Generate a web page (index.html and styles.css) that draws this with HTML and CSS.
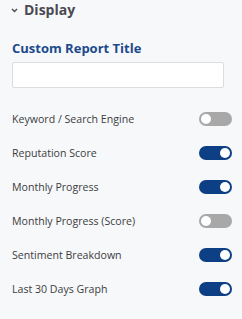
FILE: index.html
```html
<!DOCTYPE html>
<html lang="en">
<head>
  <meta charset="UTF-8">
  <meta name="viewport" content="width=device-width, initial-scale=1.0">
  <title>Display Settings</title>
  <link rel="stylesheet" href="styles.css">
</head>
<body>

  <div class="panel">
    <!-- Section header -->
    <div class="section-head">
      <svg class="chevron" width="7" height="5" viewBox="0 0 7 5">
        <path d="M1 1 L3.5 3.5 L6 1" fill="none" stroke="#4a4a52" stroke-width="1.4"/>
      </svg>
      <span>Display</span>
    </div>

    <div class="field-label">Custom Report Title</div>
    <input class="title-input" type="text">

    <div class="options">
      <div class="option">
        <span>Keyword / Search Engine</span>
        <span class="toggle"></span>
      </div>
      <div class="option">
        <span>Reputation Score</span>
        <span class="toggle on"></span>
      </div>
      <div class="option">
        <span>Monthly Progress</span>
        <span class="toggle on"></span>
      </div>
      <div class="option">
        <span>Monthly Progress (Score)</span>
        <span class="toggle"></span>
      </div>
      <div class="option">
        <span>Sentiment Breakdown</span>
        <span class="toggle on"></span>
      </div>
      <div class="option">
        <span>Last 30 Days Graph</span>
        <span class="toggle on"></span>
      </div>
    </div>
  </div>

  <script>
    // Flip a switch when clicked
    document.querySelectorAll('.toggle').forEach(t => {
      t.addEventListener('click', function() {
        t.classList.toggle('on');
      });
    });
  </script>

</body>
</html>
```

FILE: styles.css
```css
body {
  font-family: "Open Sans", Arial, sans-serif;
  background-color: #f7f8fa;
  margin: 0;
  padding: 0;
}

.panel {
  padding: 0 10px 0 12px;
}

.section-head {
  display: flex;
  align-items: center;
  gap: 6px;
  font-size: 14px;
  font-weight: bold;
  line-height: 19px;
  color: #4a4a52;
}

.chevron {
  margin-left: -1px;
  margin-top: 1px;
}

.field-label {
  margin-top: 21px;
  font-size: 13px;
  font-weight: bold;
  line-height: 16px;
  color: #1c4a8c;
}

.title-input {
  display: block;
  box-sizing: border-box;
  width: 212px;
  height: 26px;
  margin-top: 6px;
  border: 1px solid #dcdde0;
  border-radius: 2px;
  background: #fff;
}

.options {
  margin-top: 14px;
}

.option {
  display: flex;
  justify-content: space-between;
  align-items: center;
  height: 34px;
  font-size: 10.6px;
  color: #3c3c40;
}

.toggle {
  position: relative;
  width: 33px;
  height: 14px;
  border-radius: 7px;
  background-color: #a8a8a8;
  cursor: pointer;
}

.toggle::after {
  content: "";
  position: absolute;
  top: 2px;
  left: 2px;
  width: 10px;
  height: 10px;
  border-radius: 50%;
  background: #fff;
}

.toggle.on {
  background-color: #0d3f84;
}

.toggle.on::after {
  left: 21px;
}
```
